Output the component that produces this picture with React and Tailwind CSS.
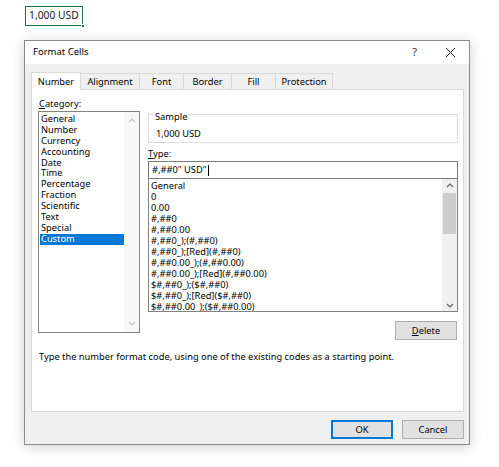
import React from 'react';

const typeCodes = [
  'General',
  '0',
  '0.00',
  '#,##0',
  '#,##0.00',
  '#,##0_);(#,##0)',
  '#,##0_);[Red](#,##0)',
  '#,##0.00_);(#,##0.00)',
  '#,##0.00_);[Red](#,##0.00)',
  '$#,##0_);($#,##0)',
  '$#,##0_);[Red]($#,##0)',
  '$#,##0.00_);($#,##0.00)',
];

const categories = [
  'General', 'Number', 'Currency', 'Accounting', 'Date', 'Time',
  'Percentage', 'Fraction', 'Scientific', 'Text', 'Special', 'Custom',
];

const tabs = ['Number', 'Alignment', 'Font', 'Border', 'Fill', 'Protection'];
const tabWidths = ['w-[50px]', 'w-[59px]', 'w-[44px]', 'w-[48px]', 'w-[44px]', 'w-[57px]'];

function Chevron({ up }) {
  return (
    <svg width="8" height="5" viewBox="0 0 8 5" className="block">
      <path
        d={up ? 'M1 4 L4 1 L7 4' : 'M1 1 L4 4 L7 1'}
        fill="none"
        stroke="currentColor"
        strokeWidth="1.2"
      />
    </svg>
  );
}

export default function App() {
  return (
    <div className="w-[499px] h-[467px] bg-white overflow-hidden text-[#000] font-['Noto_Sans',sans-serif] text-[9.3px]">
      {/* Selected cell */}
      <div className="ml-[25px] mt-[6px] w-[58px] h-[20px] border-[1.5px] border-[#217346] relative flex items-center pl-[3px] text-[10.3px] text-[#222] whitespace-nowrap">
        1,000 USD
        <div className="absolute right-[-3px] bottom-[-3px] w-[4px] h-[4px] bg-[#217346] border border-white" />
      </div>

      {/* Dialog */}
      <div className="ml-[24px] mt-[14px] w-[446px] h-[405px] border border-[#8a8a8a] bg-[#f0f0f0] shadow-[0_2px_12px_rgba(0,0,0,0.18)] flex flex-col">
        {/* Title bar */}
        <div className="h-[23px] bg-white flex items-center pl-[8px] shrink-0">
          <span className="text-[9.5px]">Format Cells</span>
          <span className="ml-auto mr-[28px] text-[11px] text-[#333]">?</span>
          <svg width="11" height="11" viewBox="0 0 11 11" className="mr-[13px]">
            <path d="M1 1 L10 10 M10 1 L1 10" stroke="#222" strokeWidth="1" />
          </svg>
        </div>

        {/* Tabs */}
        <div className="flex items-end ml-[6px] mt-[8px] h-[17px] shrink-0">
          {tabs.map((t, i) => (
            <div
              key={t}
              className={
                i === 0
                  ? `${tabWidths[i]} h-[18px] bg-white border border-b-0 border-[#d9d9d9] flex items-center justify-center relative top-[1px]`
                  : `${tabWidths[i]} h-[16px] bg-[#f0f0f0] border border-l-0 border-b-0 border-[#d9d9d9] flex items-center justify-center`
              }
            >
              {t}
            </div>
          ))}
        </div>

        {/* Panel */}
        <div className="ml-[6px] w-[433px] h-[323px] bg-white border border-[#d9d9d9] shrink-0 flex flex-col pl-[6px] pt-[6px]">
          <div className="flex">
            {/* Category column */}
            <div className="w-[102px]">
              <div className="h-[15px] leading-[15px] pl-[1px]"><u>C</u>ategory:</div>
              <div className="h-[222px] border border-[#828282] flex">
                <div className="flex-1 pt-[2px] pl-[1px]">
                  {categories.map((c) => (
                    <div
                      key={c}
                      className={
                        c === 'Custom'
                          ? 'h-[10.9px] leading-[10.9px] pl-[1px] bg-[#0078d7] text-white'
                          : 'h-[10.9px] leading-[10.9px] pl-[1px]'
                      }
                    >
                      {c}
                    </div>
                  ))}
                </div>
                <div className="w-[15px] bg-[#f7f7f7] flex flex-col items-center justify-between py-[6px] text-[#c2c2c2]">
                  <Chevron up />
                  <Chevron />
                </div>
              </div>
            </div>

            {/* Right column */}
            <div className="ml-[8px] w-[310px]">
              <div className="relative mt-[18px] h-[29px] border border-[#dcdcdc]">
                <span className="absolute left-[5px] top-[-4px] bg-white px-[1px] leading-[11px]">Sample</span>
                <div className="pl-[7px] pt-[12px] leading-[13px]">1,000 USD</div>
              </div>
              <div className="mt-[3px] h-[15px] leading-[15px]"><u>T</u>ype:</div>
              <div className="h-[18px] border border-[#7a7a7a] flex items-center pl-[3px]">
                #,##0" USD"<span className="inline-block w-px h-[11px] bg-black ml-[1px]" />
              </div>
              <div className="h-[133px] border border-t-0 border-[#828282] flex">
                <div className="flex-1 pt-[1px] pl-[2px] overflow-hidden">
                  {typeCodes.map((c) => (
                    <div key={c} className="h-[11px] leading-[11px] whitespace-nowrap">{c}</div>
                  ))}
                </div>
                <div className="w-[15px] bg-[#f0f0f0] flex flex-col items-center text-[#606060] pt-[4px] pb-[3px]">
                  <Chevron up />
                  <div className="mt-[5px] w-[13px] h-[41px] bg-[#cdcdcd]" />
                  <div className="mt-auto"><Chevron /></div>
                </div>
              </div>
              <div className="flex justify-end mt-[9px]">
                <div className="w-[62px] h-[19px] bg-[#e1e1e1] border border-[#adadad] flex items-center justify-center mr-[1px]">
                  <span><u>D</u>elete</span>
                </div>
              </div>
            </div>
          </div>
          <div className="mt-[10px] pl-[1px] leading-[13px]">
            Type the number format code, using one of the existing codes as a starting point.
          </div>
        </div>

        {/* Buttons */}
        <div className="flex justify-end gap-[9px] pr-[5px] mt-[8px]">
          <div className="w-[62px] h-[19px] bg-[#e1e1e1] border-2 border-[#0078d7] flex items-center justify-center">OK</div>
          <div className="w-[62px] h-[19px] bg-[#e1e1e1] border border-[#adadad] flex items-center justify-center">Cancel</div>
        </div>
      </div>
    </div>
  );
}
